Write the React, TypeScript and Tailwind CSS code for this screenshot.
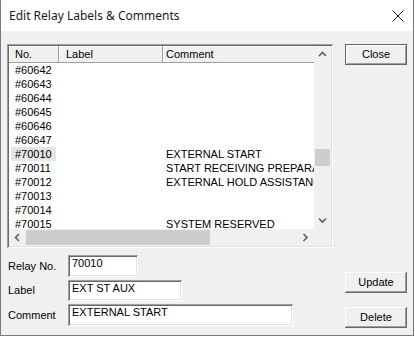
import React from "react";

const rows: { no: string; comment: string; sel?: boolean }[] = [
  { no: "#60642", comment: "" },
  { no: "#60643", comment: "" },
  { no: "#60644", comment: "" },
  { no: "#60645", comment: "" },
  { no: "#60646", comment: "" },
  { no: "#60647", comment: "" },
  { no: "#70010", comment: "EXTERNAL START", sel: true },
  { no: "#70011", comment: "START RECEIVING PREPARATION" },
  { no: "#70012", comment: "EXTERNAL HOLD ASSISTANCE" },
  { no: "#70013", comment: "" },
  { no: "#70014", comment: "" },
  { no: "#70015", comment: "SYSTEM RESERVED" },
];

const font = { fontFamily: '"Liberation Sans", Arial, sans-serif' };

function Chevron({ dir }: { dir: "up" | "down" | "left" | "right" }) {
  const d =
    dir === "up"
      ? "M1 5 L4.5 1.5 L8 5"
      : dir === "down"
      ? "M1 1.5 L4.5 5 L8 1.5"
      : dir === "left"
      ? "M5 1 L1.5 4.5 L5 8"
      : "M1.5 1 L5 4.5 L1.5 8";
  const w = dir === "up" || dir === "down" ? 9 : 7;
  const h = dir === "up" || dir === "down" ? 7 : 9;
  return (
    <svg width={w} height={h} viewBox={`0 0 ${w} ${h}`}>
      <path d={d} fill="none" stroke="#606060" strokeWidth="1.6" />
    </svg>
  );
}

const sunken =
  "shadow-[inset_1px_1px_0_#a0a0a0,inset_-1px_-1px_0_#ffffff,inset_2px_2px_0_#696969,inset_-2px_-2px_0_#e3e3e3]";

function Button({ label, def }: { label: string; def?: boolean }) {
  return (
    <div
      className={
        "w-[62px] h-[21px] flex items-center justify-center text-[11px] text-black bg-[#f0f0f0] " +
        (def
          ? "shadow-[inset_0_0_0_1px_#646464,inset_1px_1px_0_1px_#ffffff,inset_-1px_-1px_0_1px_#a0a0a0]"
          : "shadow-[inset_-1px_-1px_0_#696969,inset_1px_1px_0_#ffffff,inset_-2px_-2px_0_#a0a0a0]")
      }
    >
      {label}
    </div>
  );
}

function Field({
  label,
  value,
  w,
  h,
  mt,
}: {
  label: string;
  value: string;
  w: string;
  h: string;
  mt: string;
}) {
  return (
    <div className={"flex items-center " + mt}>
      <div className="w-[60px] text-[11px] text-black leading-[13px]">{label}</div>
      <div className={`${w} ${h} bg-white ${sunken} pl-[4px] pt-[2px] text-[11px] leading-[13px] text-black`}>
        {value}
      </div>
    </div>
  );
}

export default function App() {
  return (
    <div className="w-[415px] h-[339px] bg-white overflow-hidden" style={font}>
      <div className="w-[414px] h-[336px] flex flex-col border-l border-r border-b border-[#7a7a7a]">
        {/* Title bar */}
        <div className="h-[31px] bg-white flex items-center justify-between shrink-0">
          <div
            className="pl-[8px] text-[12px] text-[#1a1a1a]"
            style={{ fontFamily: '"Noto Sans", "Open Sans", sans-serif' }}
          >
            Edit Relay Labels &amp; Comments
          </div>
          <div className="pr-[9px] pt-[1px]">
            <svg width="12" height="12" viewBox="0 0 12 12">
              <path d="M0.5 0.5 L11.5 11.5 M11.5 0.5 L0.5 11.5" stroke="#1a1a1a" strokeWidth="1" fill="none" />
            </svg>
          </div>
        </div>

        {/* Body */}
        <div className="flex-1 bg-[#f0f0f0] flex flex-col">
          <div className="flex pt-[13px]">
            {/* List box */}
            <div className={`ml-[6px] w-[326px] h-[204px] bg-white p-[2px] ${sunken}`}>
              <div className="flex flex-col w-[322px] h-[200px]">
                <div className="flex h-[183px]">
                  <div className="w-[305px] h-[183px] flex flex-col overflow-hidden">
                    {/* Header */}
                    <div className="flex h-[17px] shrink-0 text-[11px] text-black border-b border-[#a0a0a0] bg-[#f0f0f0]">
                      <div className="w-[50px] h-full flex items-center pl-[6px] border-r border-[#a0a0a0] shadow-[inset_1px_1px_0_#ffffff]">
                        No.
                      </div>
                      <div className="w-[104px] h-full flex items-center pl-[7px] border-r border-[#a0a0a0] shadow-[inset_1px_1px_0_#ffffff]">
                        Label
                      </div>
                      <div className="flex-1 h-full flex items-center pl-[3px] shadow-[inset_1px_1px_0_#ffffff]">
                        Comment
                      </div>
                    </div>
                    {/* Rows */}
                    <div className="flex-1 overflow-hidden">
                      {rows.map((r) => (
                        <div key={r.no} className="flex h-[14px] text-[11px] leading-[14px] text-black whitespace-nowrap">
                          <div className="w-[50px] pl-[2px] shrink-0">
                            <div className={"w-[45px] pl-[4px] " + (r.sel ? "bg-[#e5e5e5]" : "")}>{r.no}</div>
                          </div>
                          <div className="w-[105px] shrink-0" />
                          <div className="pl-[2px] overflow-hidden">{r.comment}</div>
                        </div>
                      ))}
                    </div>
                  </div>
                  {/* Vertical scrollbar */}
                  <div className="w-[17px] h-[183px] bg-[#f0f0f0] flex flex-col">
                    <div className="h-[17px] flex items-center justify-center">
                      <Chevron dir="up" />
                    </div>
                    <div className="flex-1 flex flex-col">
                      <div className="h-[86px]" />
                      <div className="h-[17px] mx-[1px] bg-[#cdcdcd]" />
                    </div>
                    <div className="h-[17px] flex items-center justify-center">
                      <Chevron dir="down" />
                    </div>
                  </div>
                </div>
                {/* Horizontal scrollbar */}
                <div className="flex h-[17px]">
                  <div className="w-[305px] h-[17px] bg-[#f0f0f0] flex items-center">
                    <div className="w-[17px] h-full flex items-center justify-center">
                      <Chevron dir="left" />
                    </div>
                    <div className="w-[184px] h-[15px] my-[1px] bg-[#cdcdcd]" />
                    <div className="flex-1" />
                    <div className="w-[17px] h-full flex items-center justify-center">
                      <Chevron dir="right" />
                    </div>
                  </div>
                  <div className="w-[17px] h-[17px] bg-[#f0f0f0]" />
                </div>
              </div>
            </div>
            <div className="ml-[12px]">
              <Button label="Close" def />
            </div>
          </div>

          {/* Bottom area */}
          <div className="flex pl-[7px]">
            <div className="w-[337px] flex flex-col pt-[7px]">
              <Field label="Relay No." value="70010" w="w-[70px]" h="h-[22px]" mt="" />
              <Field label="Label" value="EXT ST AUX" w="w-[114px]" h="h-[21px]" mt="mt-[3px]" />
              <Field label="Comment" value="EXTERNAL START" w="w-[225px]" h="h-[22px]" mt="mt-[3px]" />
            </div>
            <div className="flex flex-col pt-[24px]">
              <Button label="Update" />
              <div className="h-[14px]" />
              <Button label="Delete" />
            </div>
          </div>
        </div>
      </div>
    </div>
  );
}
